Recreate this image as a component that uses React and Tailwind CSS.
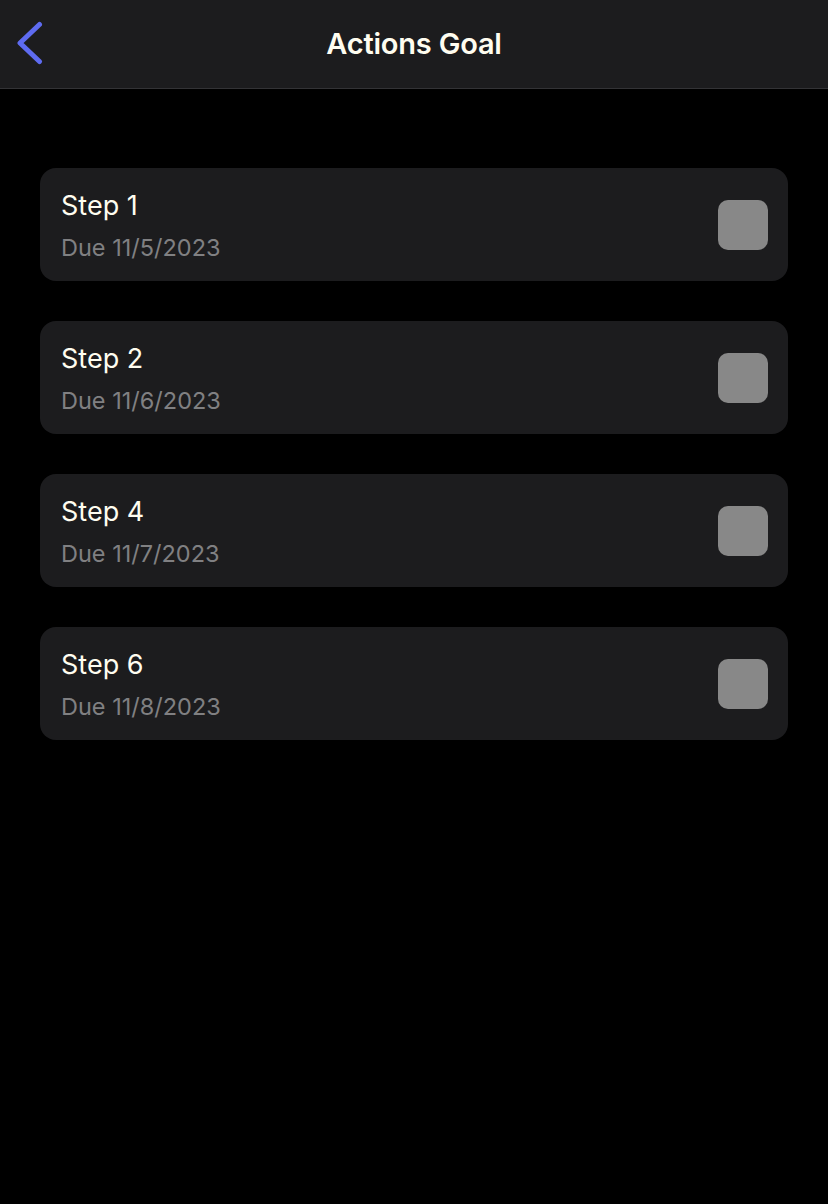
const steps = [
  { id: 1, title: "Step 1", due: "11/5/2023" },
  { id: 2, title: "Step 2", due: "11/6/2023" },
  { id: 4, title: "Step 4", due: "11/7/2023" },
  { id: 6, title: "Step 6", due: "11/8/2023" },
];

export default function App() {
  return (
    <div
      className="min-h-[1204px] bg-black"
      style={{ fontFamily: "Inter, 'Noto Sans', sans-serif" }}
    >
      <header className="relative h-[89px] bg-[#1c1c1e] border-b border-[#333336] flex items-center justify-center">
        <button className="absolute left-[15px] top-[21px] text-[#5e6bf0]">
          <svg width="30" height="44" viewBox="0 0 30 44" fill="none">
            <path
              d="M24.5 3.5 L5 22 L24.5 40.5"
              stroke="currentColor"
              strokeWidth="5"
              strokeLinecap="round"
              strokeLinejoin="round"
            />
          </svg>
        </button>
        <h1 className="text-[29px] font-semibold text-[#fffdf0] tracking-[-0.2px]">
          Actions Goal
        </h1>
      </header>

      <div className="px-[40px] pt-[79px] flex flex-col gap-[40px]">
        {steps.map((step) => (
          <div
            key={step.id}
            className="h-[113px] rounded-[16px] bg-[#1c1c1e] pl-[21px] pr-[20px] flex items-center justify-between"
          >
            <div className="flex flex-col pt-[3px]">
              <span className="text-[27px] leading-[32px] text-[#fffdf0]">
                {step.title}
              </span>
              <span className="text-[23.5px] leading-[30px] mt-[11px] text-[#808082]">
                Due {step.due}
              </span>
            </div>
            <div className="w-[50px] h-[50px] rounded-[10px] bg-[#888888]" />
          </div>
        ))}
      </div>
    </div>
  );
}
